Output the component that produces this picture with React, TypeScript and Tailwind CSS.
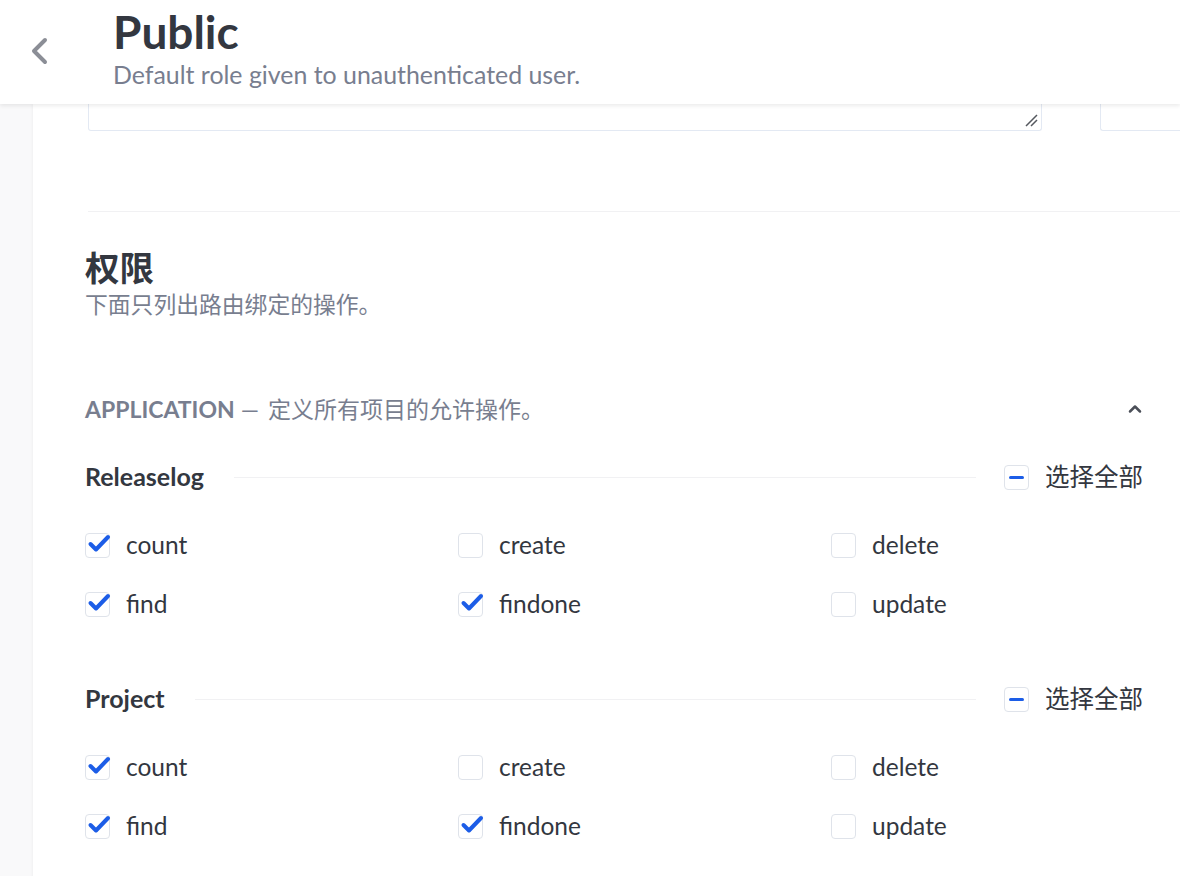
import { ChevronUp } from "lucide-react";

const font = "font-['Lato','Noto_Sans_CJK_SC',sans-serif]";

const Check = ({ checked }: { checked: boolean }) => (
  <span className="relative flex h-[25px] w-[25px] shrink-0 items-center justify-center rounded-[4px] border border-[#dfe3ea] bg-white">
    {checked && (
      <svg className="absolute -top-[1px] left-[1px] h-[22px] w-[24px]" viewBox="0 0 24 22" fill="none">
        <path
          d="M3.5 11L9 16.5L21 4"
          stroke="#1c5de7"
          strokeWidth="4"
          strokeLinecap="round"
          strokeLinejoin="round"
        />
      </svg>
    )}
  </span>
);

type Perm = { name: string; checked: boolean };

const Section = ({ title, perms }: { title: string; perms: Perm[] }) => (
  <div>
    <div className="flex h-[40px] items-center">
      <span className="text-[25px] font-bold text-[#333740]">{title}</span>
      <div className="ml-[30px] mr-[28px] h-px flex-1 bg-[#f1f1f3]" />
      <span className="flex items-center">
        <span className="flex h-[25px] w-[25px] items-center justify-center rounded-[4px] border border-[#dfe3ea] bg-white">
          <span className="h-[3px] w-[15px] rounded-full bg-[#1c5de7]" />
        </span>
        <span className="ml-[16px] text-[24.5px] text-[#333740]">选择全部</span>
      </span>
    </div>
    <div className="mt-[19px] grid grid-cols-[373px_373px_373px]">
      {perms.map((p) => (
        <label key={p.name} className="flex h-[59px] items-center">
          <Check checked={p.checked} />
          <span className="ml-[16px] text-[24.5px] text-[#333740]">{p.name}</span>
        </label>
      ))}
    </div>
  </div>
);

const perms: Perm[] = [
  { name: "count", checked: true },
  { name: "create", checked: false },
  { name: "delete", checked: false },
  { name: "find", checked: true },
  { name: "findone", checked: true },
  { name: "update", checked: false },
];

export default function App() {
  return (
    <div className={`${font} h-[876px] w-[1180px] overflow-hidden bg-[#f9f9fa]`}>
      <header className="relative z-10 flex h-[104px] items-start bg-white shadow-[0_2px_4px_rgba(0,0,0,0.08)]">
        <button className="ml-[28px] mt-[36px] text-[#8b8e96]">
          <svg width="22" height="30" viewBox="0 0 22 30" fill="none">
            <path d="M17 4L6 15l11 11" stroke="currentColor" strokeWidth="4" strokeLinecap="round" strokeLinejoin="round" />
          </svg>
        </button>
        <div className="ml-[63px] mt-[9px]">
          <h1 className="text-[46px] font-bold leading-[46px] text-[#333740]">Public</h1>
          <p className="mt-[5px] text-[24.9px] leading-[28px] text-[#787e8f]">Default role given to unauthenticated user.</p>
        </div>
      </header>

      <main className="ml-[33px] h-full bg-white pl-[52px] shadow-[-1px_0_3px_rgba(0,0,0,0.04)]">
        <div className="flex pl-[3px]">
          <div className="relative h-[27px] w-[954px] rounded-b-[3px] border border-t-0 border-[#e3e9f3]">
            <svg className="absolute bottom-[3px] right-[3px]" width="14" height="14" viewBox="0 0 14 14">
              <path d="M2 13L13 2M7 13l6-6" stroke="#55585f" strokeWidth="1.5" />
            </svg>
          </div>
          <div className="ml-[58px] h-[27px] flex-1 rounded-bl-[3px] border border-r-0 border-t-0 border-[#e3e9f3]" />
        </div>

        <div className="ml-[3px] mt-[80px] h-px bg-[#f1f1f3]" />

        <h2 className="mt-[36px] text-[34.5px] font-bold leading-[40px] text-[#333740]">权限</h2>
        <p className="mt-[1px] text-[22.8px] leading-[30px] text-[#787e8f]">下面只列出路由绑定的操作。</p>

        <div className="mt-[75px] flex h-[30px] w-[1058px] items-center justify-between">
          <p className="text-[23px] text-[#787e8f]">
            <span className="font-bold">APPLICATION</span>
            <span className="ml-[6px]">—</span>
            <span className="ml-[9px]">定义所有项目的允许操作。</span>
          </p>
          <ChevronUp className="mr-[-2px] h-[20px] w-[20px] text-[#4b4f58]" strokeWidth={3} />
        </div>

        <div className="mt-[33px] w-[1058px]">
          <Section title="Releaselog" perms={perms} />
          <div className="mt-[45px]">
            <Section title="Project" perms={perms} />
          </div>
        </div>
      </main>
    </div>
  );
}
